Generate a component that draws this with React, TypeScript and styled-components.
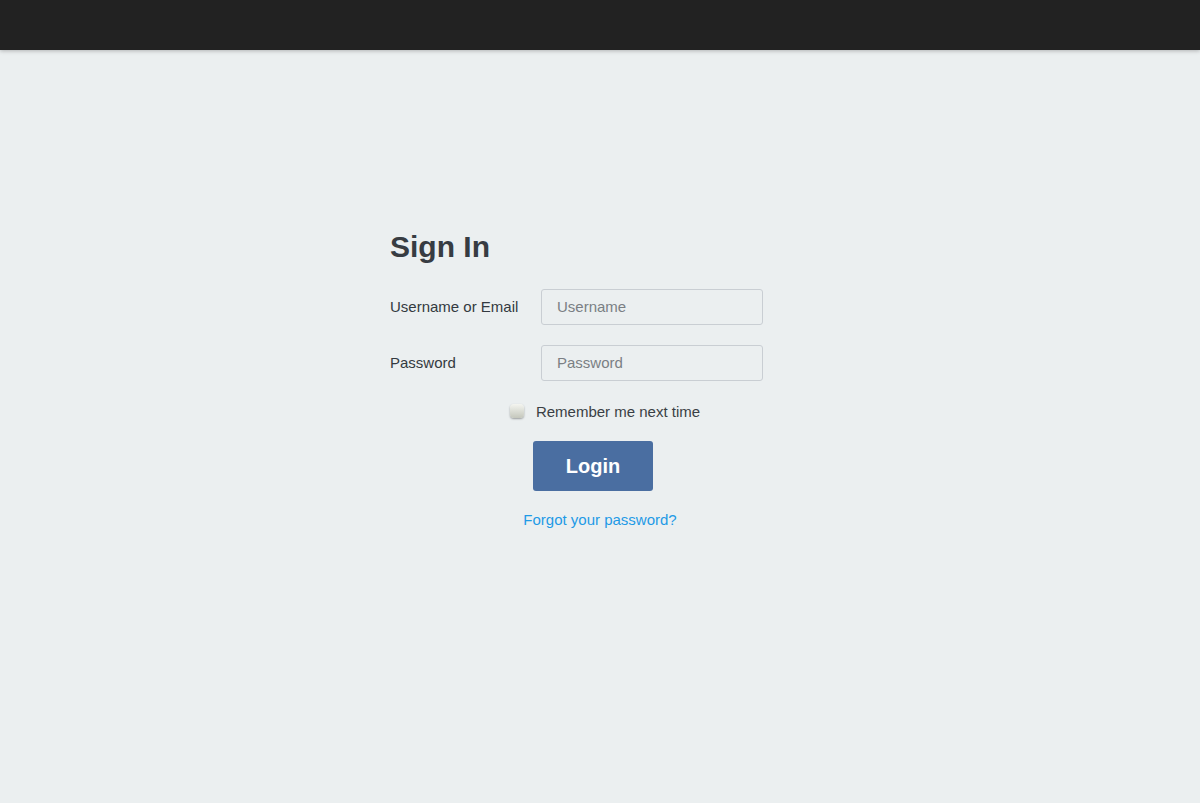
import styled, { createGlobalStyle } from "styled-components";

const GlobalStyle = createGlobalStyle`
  html, body {
    margin: 0;
    padding: 0;
    background-color: #ebeff0;
    font-family: "Liberation Sans", Arial, sans-serif;
  }
  * {
    box-sizing: border-box;
  }
`;

const TopBar = styled.header`
  height: 50px;
  background-color: #222222;
  box-shadow: 0 1px 4px rgba(0, 0, 0, 0.25);
  position: relative;
  z-index: 1;
`;

const Main = styled.main`
  min-height: 753px;
  display: flex;
  justify-content: center;
  padding-top: 180px;
`;

const Form = styled.form`
  width: 420px;
  display: flex;
  flex-direction: column;
`;

const Title = styled.h1`
  margin: 0 0 26px;
  font-size: 30px;
  line-height: 33px;
  font-weight: bold;
  color: #373c42;
`;

const FieldRow = styled.div`
  display: flex;
  align-items: center;
  margin-bottom: 20px;
`;

const Label = styled.label`
  width: 151px;
  padding-bottom: 2px;
  font-size: 15px;
  color: #333a40;
`;

const Input = styled.input`
  width: 222px;
  height: 36px;
  padding: 0 15px 1px;
  border: 1px solid #c9ced3;
  border-radius: 3px;
  background-color: #ebeff0;
  font-family: inherit;
  font-size: 15px;
  color: #333;
  outline: none;

  &::placeholder {
    color: #7a7f84;
  }
`;

const RememberRow = styled.label`
  display: flex;
  align-items: center;
  justify-content: center;
  gap: 12px;
  height: 20px;
  padding-left: 10px;
  font-size: 15px;
  color: #3a3f44;
`;

const CheckBox = styled.span`
  width: 14px;
  height: 14px;
  border-radius: 4px;
  background: linear-gradient(#f4f5f0, #c4c7bc);
  box-shadow: 0 1px 2px rgba(0, 0, 0, 0.35);
`;

const LoginButton = styled.button`
  align-self: center;
  margin: 20px 14px 0 0;
  width: 120px;
  height: 50px;
  border: none;
  border-radius: 3px;
  background-color: #4a6ea1;
  color: #ffffff;
  font-family: inherit;
  font-size: 20px;
  font-weight: bold;
  cursor: pointer;
`;

const ForgotLink = styled.a`
  align-self: center;
  margin-top: 20px;
  font-size: 15px;
  line-height: 17px;
  color: #1e9ae6;
  text-decoration: none;
`;

export default function App() {
  return (
    <>
      <GlobalStyle />
      <TopBar />
      <Main>
        <Form onSubmit={(e) => e.preventDefault()}>
          <Title>Sign In</Title>
          <FieldRow>
            <Label>Username or Email</Label>
            <Input placeholder="Username" />
          </FieldRow>
          <FieldRow>
            <Label>Password</Label>
            <Input type="password" placeholder="Password" />
          </FieldRow>
          <RememberRow>
            <CheckBox />
            Remember me next time
          </RememberRow>
          <LoginButton type="submit">Login</LoginButton>
          <ForgotLink href="#">Forgot your password?</ForgotLink>
        </Form>
      </Main>
    </>
  );
}
